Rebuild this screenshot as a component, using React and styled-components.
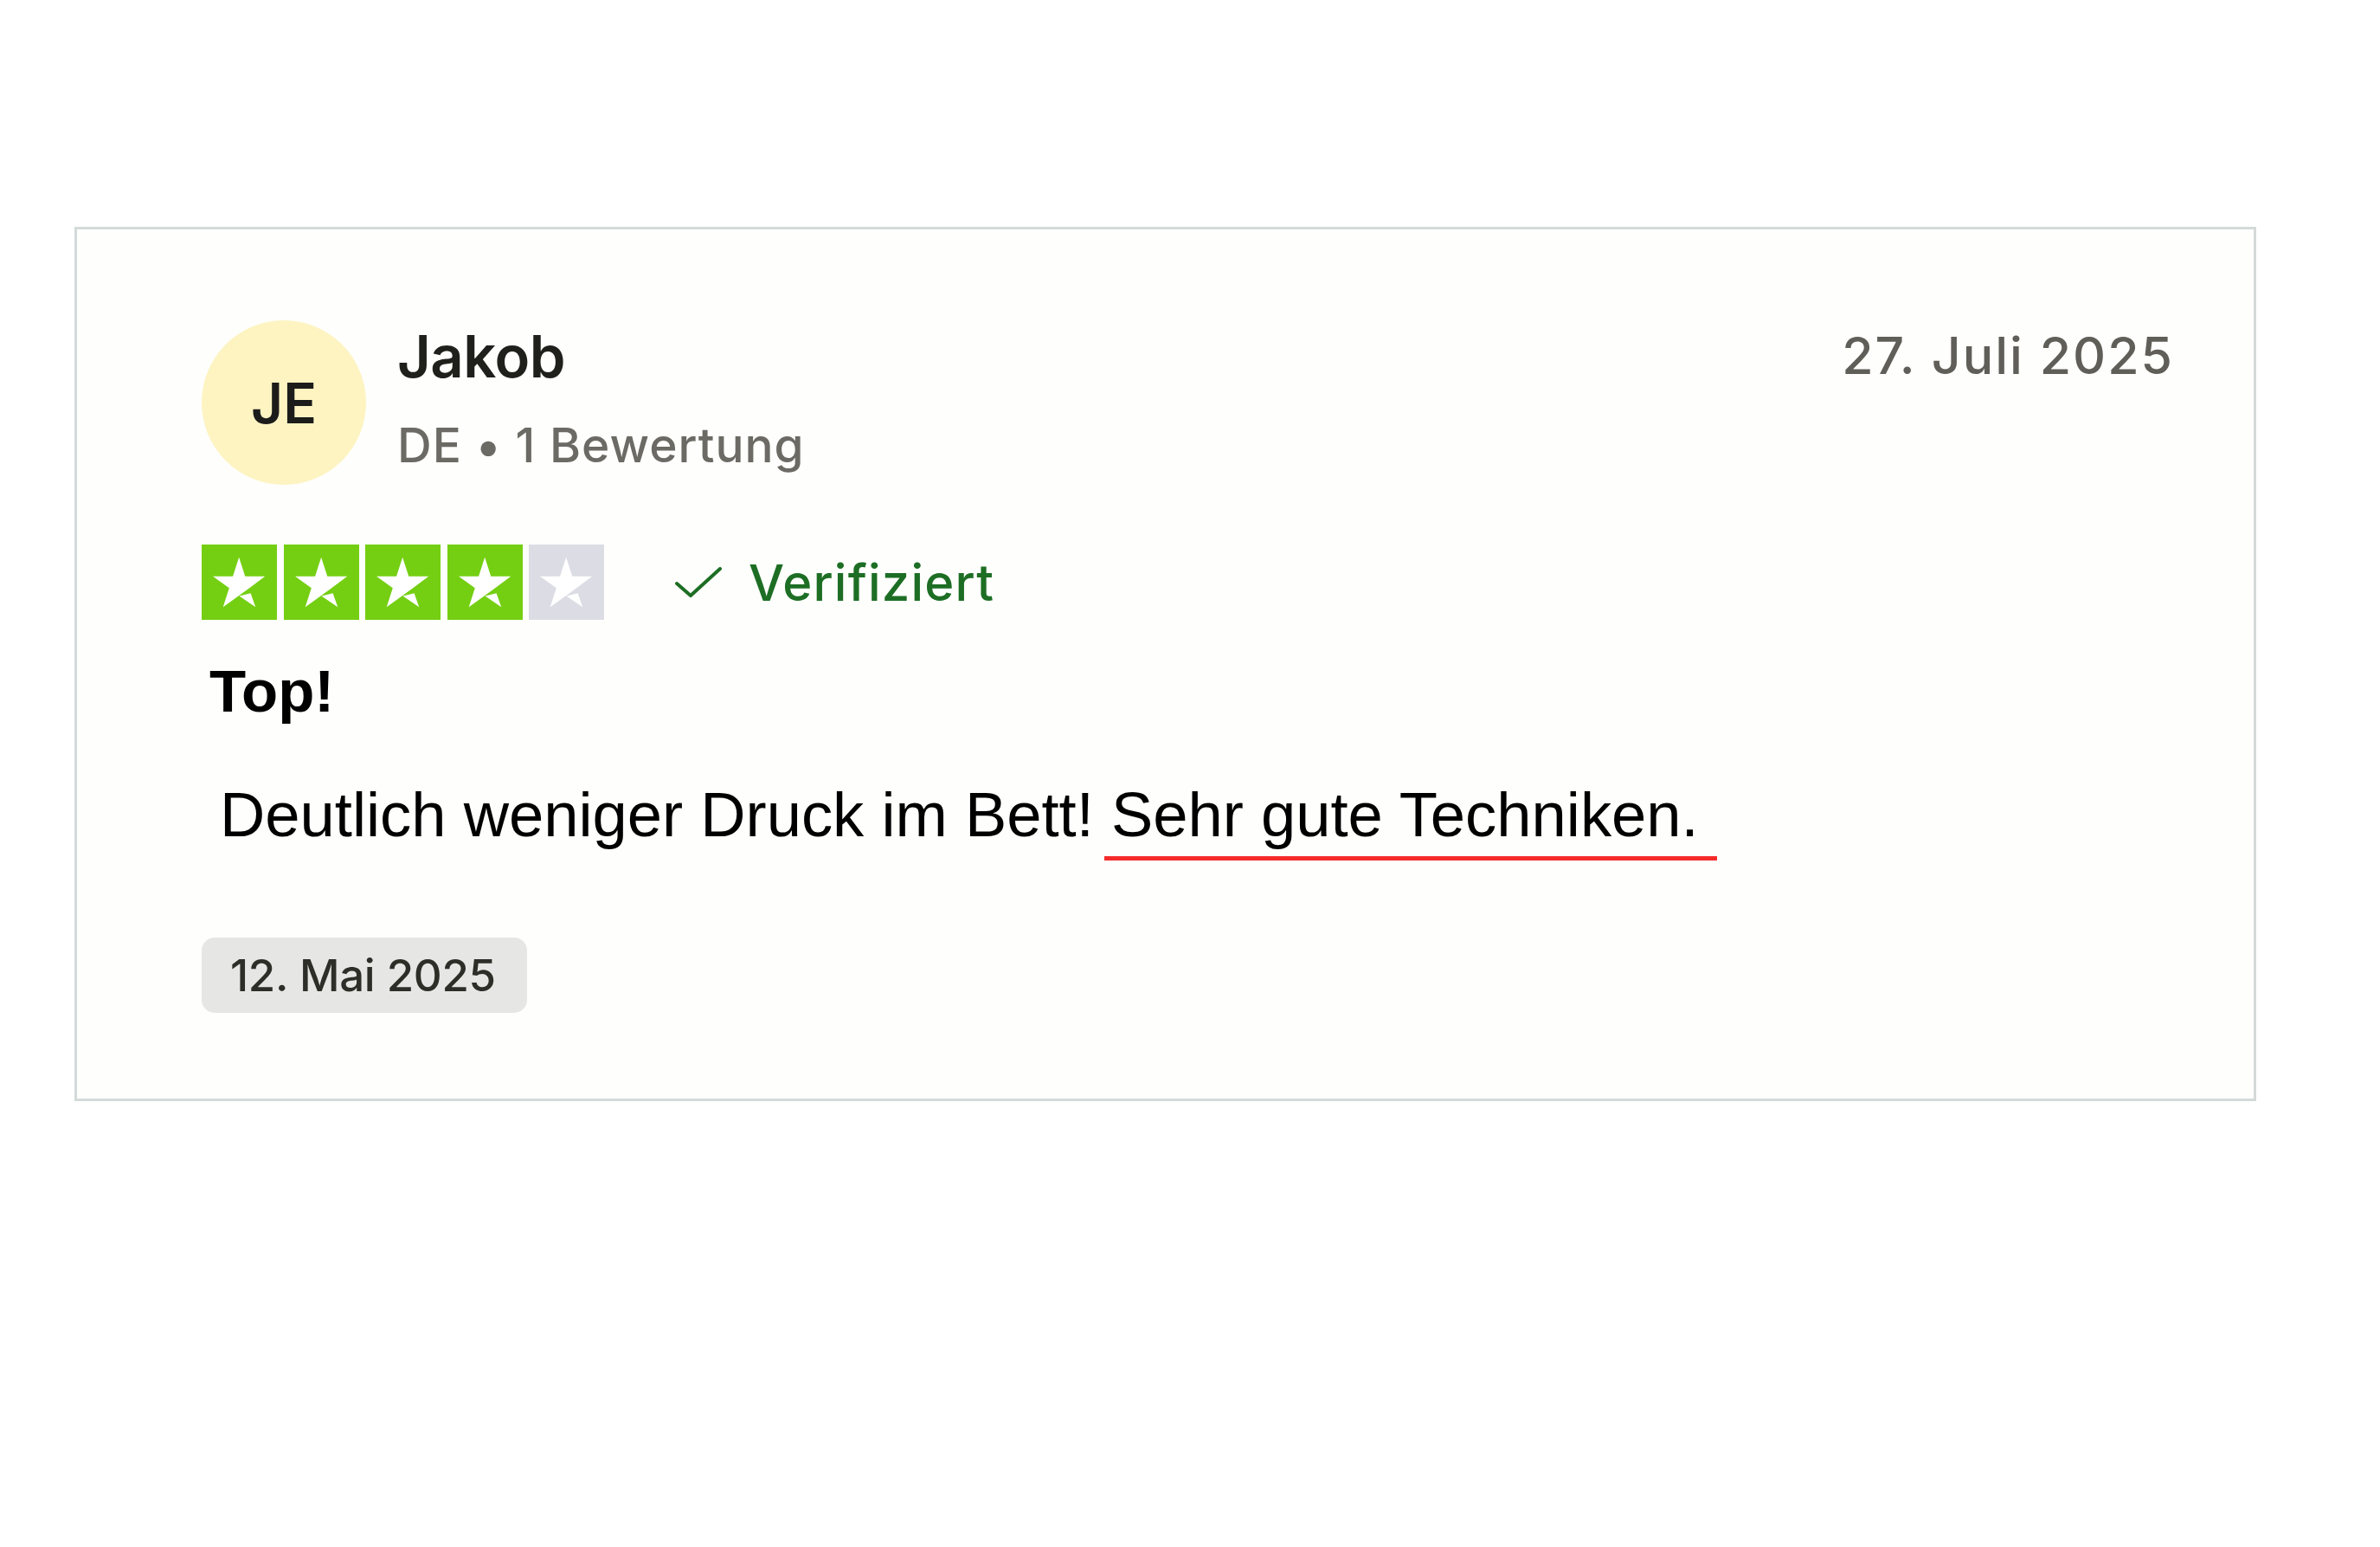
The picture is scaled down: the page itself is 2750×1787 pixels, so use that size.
import styled, { createGlobalStyle } from "styled-components";

const GlobalStyle = createGlobalStyle`
  html, body {
    margin: 0;
    padding: 0;
    background: #ffffff;
  }
`;

const Page = styled.div`
  width: 2750px;
  height: 1787px;
  padding: 262px 0 0 86px;
  box-sizing: border-box;
`;

const Card = styled.div`
  width: 2521px;
  height: 1010px;
  box-sizing: border-box;
  border: 3px solid #d4dad9;
  background: #fefefc;
  padding: 105px 92px 0 144px;
  display: flex;
  flex-direction: column;
`;

const Header = styled.div`
  display: flex;
  align-items: flex-start;
`;

const Avatar = styled.div`
  width: 190px;
  height: 190px;
  border-radius: 50%;
  background: #fdf4c2;
  display: flex;
  align-items: center;
  justify-content: center;
  font-family: Inter, "Noto Sans", sans-serif;
  font-weight: 600;
  font-size: 64px;
  color: #1c1c1a;
  flex-shrink: 0;
`;

const Who = styled.div`
  margin-left: 36px;
  display: flex;
  flex-direction: column;
  padding-top: 2px;
`;

const Name = styled.div`
  font-family: Inter, "Noto Sans", sans-serif;
  font-weight: 600;
  font-size: 67px;
  line-height: 80px;
  color: #1f1f1c;
  letter-spacing: -0.5px;
`;

const Meta = styled.div`
  margin-top: 29px;
  font-family: Inter, "Noto Sans", sans-serif;
  font-weight: 500;
  font-size: 55px;
  line-height: 67px;
  color: #6b6a64;
  letter-spacing: 1px;
`;

const Posted = styled.div`
  margin-left: auto;
  padding-top: 5px;
  font-family: Inter, "Noto Sans", sans-serif;
  font-weight: 500;
  font-size: 59px;
  line-height: 72px;
  color: #605e58;
  letter-spacing: 2px;
`;

const RatingRow = styled.div`
  margin-top: 69px;
  display: flex;
  align-items: center;
`;

const Stars = styled.div`
  display: flex;
  gap: 7.5px;
`;

const StarBox = styled.div`
  width: 87px;
  height: 87px;
  background: ${(p) => (p.$on ? "#74cf12" : "#dcdce5")};
  display: flex;
  align-items: center;
  justify-content: center;
`;

const Verified = styled.div`
  margin-left: 82px;
  display: flex;
  align-items: center;
  gap: 31px;
  font-family: Inter, "Noto Sans", sans-serif;
  font-weight: 500;
  font-size: 58px;
  color: #1d6e24;
  letter-spacing: 1.2px;
`;

const Title = styled.div`
  margin: 43px 0 0 9px;
  font-family: "Liberation Sans", Arial, sans-serif;
  font-weight: 700;
  font-size: 69px;
  line-height: 80px;
  color: #000;
`;

const Body = styled.p`
  margin: 60px 0 0 21px;
  font-family: "Liberation Sans", Arial, sans-serif;
  font-size: 72.4px;
  line-height: 83px;
  color: #000;
`;

const Marked = styled.span`
  margin-left: -8px;
  padding: 0 21px 8px 8px;
  border-bottom: 5px solid #f52b2b;
`;

const DateBadge = styled.div`
  margin-top: 101px;
  align-self: flex-start;
  height: 87px;
  box-sizing: border-box;
  padding: 0 36px 0 33px;
  display: flex;
  align-items: center;
  border-radius: 15px;
  background: #e6e6e4;
  font-family: Inter, "Noto Sans", sans-serif;
  font-weight: 500;
  font-size: 51px;
  color: #2e2e29;
  letter-spacing: -0.3px;
`;

const Star = () => (
  <svg width="85" height="85" viewBox="0 0 24 24">
    <path
      fill="#ffffff"
      d="M20.4 10.1h-6.5l-2-6.2-2 6.2H3.4l5.3 3.8-2 6.2 5.3-3.8 3.3-2.4 5.1-3.8z"
    />
    <path fill="#ffffff" d="M12 16.5l3.7-.9 1.6 4.5z" />
  </svg>
);

const Check = () => (
  <svg width="54" height="36" viewBox="0 0 54 36">
    <polyline
      points="2,19 18,33 52,2"
      fill="none"
      stroke="#1d6e24"
      strokeWidth="4"
      strokeLinecap="round"
      strokeLinejoin="round"
    />
  </svg>
);

export default function App() {
  const rating = 4;
  return (
    <>
      <GlobalStyle />
      <Page>
        <Card>
          <Header>
            <Avatar>JE</Avatar>
            <Who>
              <Name>Jakob</Name>
              <Meta>DE • 1 Bewertung</Meta>
            </Who>
            <Posted>27. Juli 2025</Posted>
          </Header>
          <RatingRow>
            <Stars>
              {[1, 2, 3, 4, 5].map((n) => (
                <StarBox key={n} $on={n <= rating}>
                  <Star />
                </StarBox>
              ))}
            </Stars>
            <Verified>
              <Check />
              Verifiziert
            </Verified>
          </RatingRow>
          <Title>Top!</Title>
          <Body>
            Deutlich weniger Druck im Bett! <Marked>Sehr gute Techniken.</Marked>
          </Body>
          <DateBadge>12. Mai 2025</DateBadge>
        </Card>
      </Page>
    </>
  );
}
